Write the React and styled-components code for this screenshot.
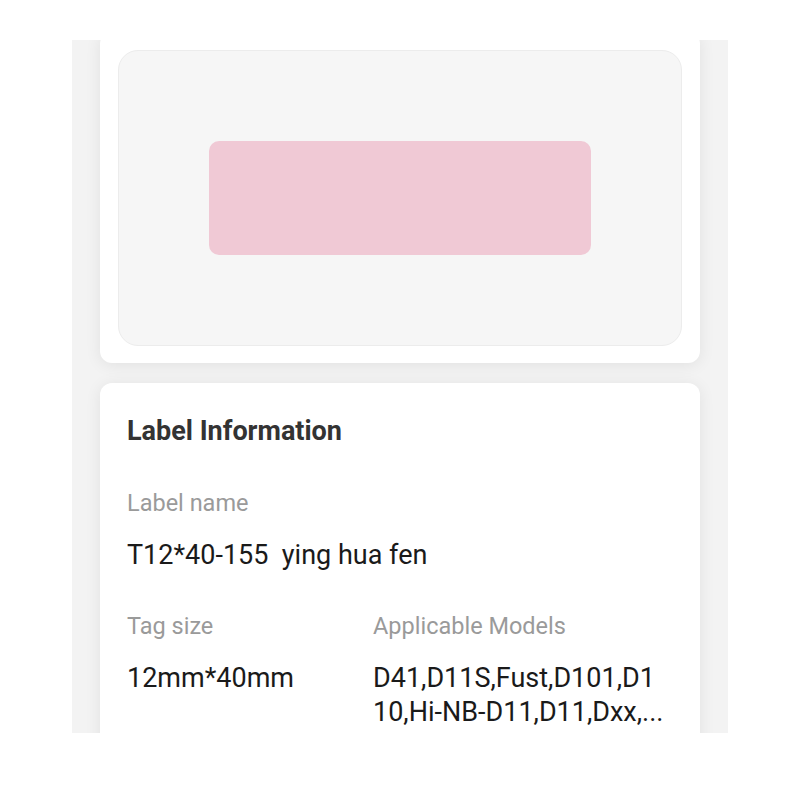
import React from 'react'
import styled, { createGlobalStyle } from 'styled-components'

const GlobalStyle = createGlobalStyle`
    body {
        margin: 0;
        background: #ffffff;
        font-family: Roboto, 'Noto Sans', Arial, sans-serif;
    }
`

const Page = styled.div`
    padding: 40px 72px 0;
`

const Screen = styled.div`
    width: 656px;
    height: 693px;
    overflow: hidden;
    background: #f3f3f3;
    display: flex;
    flex-direction: column;
    align-items: center;
    gap: 20px;
`

const Card = styled.div`
    width: 600px;
    flex-shrink: 0;
    box-sizing: border-box;
    background: #ffffff;
    border-radius: 12px;
    box-shadow: 0 2px 16px rgba(0, 0, 0, 0.08);
    padding: ${(p) => p.$padding};
    margin-top: ${(p) => p.$offset || '0'};
`

const Preview = styled.div`
    height: 296px;
    box-sizing: border-box;
    background: #f6f6f6;
    border: 1px solid #ececec;
    border-radius: 20px;
    display: flex;
    align-items: center;
    justify-content: center;
`

const LabelSwatch = styled.div`
    width: 382px;
    height: 114px;
    border-radius: 10px;
    background: ${(p) => p.$color};
`

const Title = styled.h2`
    margin: 0 0 42px;
    font-size: 27px;
    line-height: 32px;
    font-weight: 700;
    color: #333333;
`

const Grid = styled.div`
    display: grid;
    grid-template-columns: 246px 292px;
    row-gap: 40px;
`

const Field = styled.div`
    grid-column: ${(p) => (p.$wide ? '1 / -1' : 'auto')};
`

const Caption = styled.div`
    font-size: 23.5px;
    line-height: 28px;
    color: #9a9a9a;
    margin-bottom: 21px;
`

const Value = styled.div`
    font-size: 27px;
    line-height: 34px;
    color: #1a1a1a;
    word-break: break-all;
    white-space: pre-wrap;
`

export default function App() {
    return (
        <>
            <GlobalStyle />
            <Page>
                <Screen>
                    {/* 标签预览 */}
                    <Card $padding="18px 18px 17px" $offset="-8px">
                        <Preview>
                            <LabelSwatch $color="#f0c9d5" />
                        </Preview>
                    </Card>

                    {/* 标签信息 */}
                    <Card $padding="32px 27px 40px">
                        <Title>Label Information</Title>
                        <Grid>
                            <Field $wide>
                                <Caption>Label name</Caption>
                                <Value>T12*40-155  ying hua fen</Value>
                            </Field>
                            <Field>
                                <Caption>Tag size</Caption>
                                <Value>12mm*40mm</Value>
                            </Field>
                            <Field>
                                <Caption>Applicable Models</Caption>
                                <Value>D41,D11S,Fust,D101,D110,Hi-NB-D11,D11,Dxx,...</Value>
                            </Field>
                        </Grid>
                    </Card>
                </Screen>
            </Page>
        </>
    )
}
